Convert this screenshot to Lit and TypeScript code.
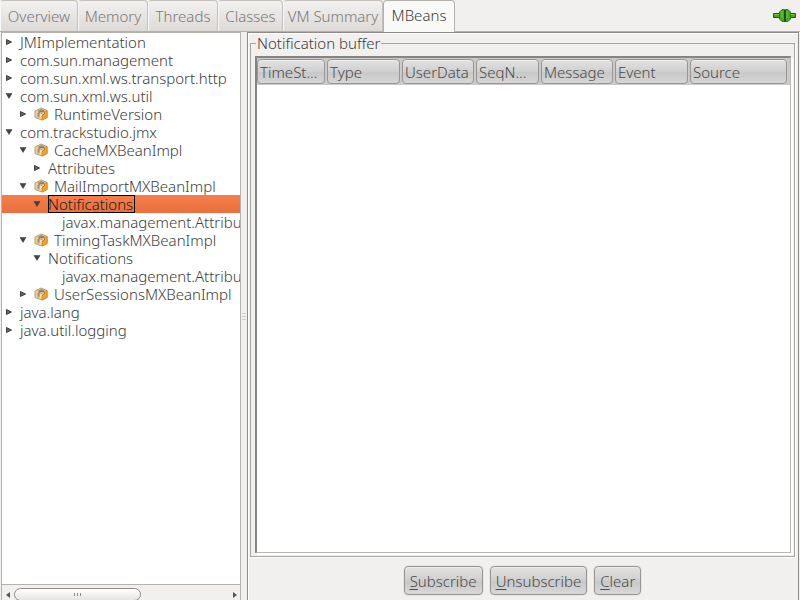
import { LitElement, html, css, svg, nothing } from "lit";
import { customElement, state } from "lit/decorators.js";
import { classMap } from "lit/directives/class-map.js";

interface TreeRow {
  label: string;
  level: number;
  open?: boolean;
  bean?: boolean;
}

const TABS = [
  { label: "Overview", size: "w78" },
  { label: "Memory", size: "w70" },
  { label: "Threads", size: "w70" },
  { label: "Classes", size: "w65" },
  { label: "VM Summary", size: "w100" },
  { label: "MBeans", size: "w72" },
];

const ROWS: TreeRow[] = [
  { label: "JMImplementation", level: 0, open: false },
  { label: "com.sun.management", level: 0, open: false },
  { label: "com.sun.xml.ws.transport.http", level: 0, open: false },
  { label: "com.sun.xml.ws.util", level: 0, open: true },
  { label: "RuntimeVersion", level: 1, open: false, bean: true },
  { label: "com.trackstudio.jmx", level: 0, open: true },
  { label: "CacheMXBeanImpl", level: 1, open: true, bean: true },
  { label: "Attributes", level: 2, open: false },
  { label: "MailImportMXBeanImpl", level: 1, open: true, bean: true },
  { label: "Notifications", level: 2, open: true },
  { label: "javax.management.AttributeChangeNotification", level: 3 },
  { label: "TimingTaskMXBeanImpl", level: 1, open: true, bean: true },
  { label: "Notifications", level: 2, open: true },
  { label: "javax.management.AttributeChangeNotification", level: 3 },
  { label: "UserSessionsMXBeanImpl", level: 1, open: false, bean: true },
  { label: "java.lang", level: 0, open: false },
  { label: "java.util.logging", level: 0, open: false },
];

const COLUMNS = [
  { label: "TimeSt...", share: 70 },
  { label: "Type", share: 75 },
  { label: "UserData", share: 74 },
  { label: "SeqN...", share: 65 },
  { label: "Message", share: 74 },
  { label: "Event", share: 75 },
  { label: "Source", share: 100 },
];
const TOTAL = COLUMNS.reduce((sum, c) => sum + c.share, 0);

const FONT = css`"Noto Sans", "Open Sans", sans-serif`;

@customElement("mbean-tree")
export class MBeanTree extends LitElement {
  @state() private selected = 9;

  static styles = css`
    :host {
      display: flex;
      flex-direction: column;
      min-height: 0;
      box-sizing: border-box;
      border: 1px solid #b5b1ad;
      border-bottom: 0;
      background: #fff;
      color: #3c3c3c;
      font: 300 15px/18px ${FONT};
    }
    .rows {
      flex: 1;
      min-height: 0;
      overflow: hidden;
      margin: 0;
      padding: 0;
      list-style: none;
    }
    .row {
      display: flex;
      align-items: center;
      height: 18px;
      white-space: nowrap;
      cursor: default;
    }
    .level0 { padding-left: 3px; }
    .level1 { padding-left: 17px; }
    .level2 { padding-left: 31px; }
    .level3 { padding-left: 45px; }
    .selected {
      background: linear-gradient(#f57e4c, #e9703d);
      color: #1c1c1c;
    }
    .toggle {
      flex: none;
      width: 8px;
      height: 8px;
      margin-right: 7px;
    }
    .bean {
      flex: none;
      width: 14px;
      height: 14px;
      margin-right: 6px;
    }
    .selected .label { outline: 1px solid #000; outline-offset: -1px; padding-right: 2px; }
    .scroll {
      display: flex;
      align-items: center;
      gap: 4px;
      height: 19px;
      margin-bottom: -4px;
      padding: 0 3px 0 4px;
      border-top: 1px solid #b5b1ad;
      background: #f1f0ee;
    }
    .arrow { width: 4px; height: 6px; flex: none; }
    .track { flex: 1; display: flex; }
    .thumb {
      box-sizing: border-box;
      display: flex;
      align-items: center;
      justify-content: center;
      gap: 2px;
      width: 59%;
      height: 13px;
      border: 1px solid #8f8d8a;
      border-radius: 7px;
      background: linear-gradient(#fff, #e6e4e2);
    }
    .grip { width: 1px; height: 3px; background: #888; }
  `;

  private toggle(open: boolean) {
    return open
      ? svg`<path d="M1 1.500H7L4 6.500Z" fill="#444" stroke="#333" stroke-width=".5"/>`
      : svg`<path d="M1.500 1.500V6.500L6.500 4Z" fill="#666" stroke="#333" stroke-width=".9"/>`;
  }

  private beanIcon() {
    return html`<svg class="bean" viewBox="0 0 14 14" aria-hidden="true">
      <path d="M1 4 7 1l6 2.500v7L8 13 1 10.500Z" fill="#ecd9b2" stroke="#a0875f" stroke-width=".8" />
      <path d="M8 6.500 13.200 3.500v7L8 13Z" fill="#ffa01a" stroke="#c47c18" stroke-width=".6" />
      <path d="M3 4 7.500 2 11 3.800 8 6Z" fill="#a88a5c" />
      <path d="M2.500 6.500 5 5l1 5-2.500 1Z" fill="#c9ad7c" />
      <path d="M5 9.500V5.500L9.500 4l1 2.500L8 8.500" fill="#f7ead0" stroke="#7e6543" stroke-width=".9" />
      <path d="M6.500 6.700 8.800 5.800" stroke="#7e6543" stroke-width=".8" />
    </svg>`;
  }

  render() {
    return html`
      <ul class="rows" role="tree" aria-label="MBeans">
        ${ROWS.map(
          (r, i) => html`<li
            role="treeitem"
            aria-level=${r.level + 1}
            aria-selected=${i === this.selected}
            class=${classMap({ row: true, [`level${r.level}`]: true, selected: i === this.selected })}
            @click=${() => (this.selected = i)}
          >
            <svg class="toggle" viewBox="0 0 8 8" aria-hidden="true">
              ${r.open === undefined ? nothing : this.toggle(r.open)}
            </svg>
            ${r.bean ? this.beanIcon() : nothing}<span class="label">${r.label}</span>
          </li>`
        )}
      </ul>
      <div class="scroll">
        <svg class="arrow" viewBox="0 0 4 6"><path d="M4 0V6L0 3Z" fill="#555" /></svg>
        <div class="track">
          <div class="thumb"><i class="grip"></i><i class="grip"></i><i class="grip"></i></div>
        </div>
        <svg class="arrow" viewBox="0 0 4 6"><path d="M0 0V6L4 3Z" fill="#555" /></svg>
      </div>
    `;
  }
}

@customElement("notification-pane")
export class NotificationPane extends LitElement {
  static styles = css`
    :host {
      display: flex;
      flex-direction: column;
      min-width: 0;
      min-height: 0;
      box-sizing: border-box;
      padding: 0 3px 5px 2px;
      border: 1px solid #8c8b89;
      border-bottom: 0;
      box-shadow: inset 1px 1px #fff;
      font: 300 15px/20px ${FONT};
      color: #3c3c3c;
    }
    .buffer {
      flex: 1;
      display: flex;
      flex-direction: column;
      min-width: 0;
      min-height: 0;
      margin: 0;
      padding: 3px 3px 3px 4px;
      border: 1px solid #a5a4a2;
      box-shadow: 1px 1px #fff;
    }
    .title { padding: 0 1px; margin-left: 1px; }
    .sheet {
      flex: 1;
      border: 1px solid #b8b7b4;
      border-top: 2px solid #858482;
      border-left: 2px solid #858482;
      background: #fff;
      box-shadow: 2px 2px #fff;
    }
    .grid {
      width: 100%;
      table-layout: fixed;
      border-collapse: collapse;
      background: #cbcac9;
    }
    .head { padding: 1px 2px 1px 0; font-weight: 300; text-align: left; }
    .head:last-child { padding-right: 3px; }
    .cell {
      box-sizing: border-box;
      height: 25px;
      padding: 0 2px;
      border: 1px solid #979694;
      border-radius: 4px;
      background: linear-gradient(#e2e2e2, #d0d0d0 50%, #c8c8c8 55%, #d6d6d6);
      box-shadow: inset 0 1px #ececec;
      line-height: 24px;
      white-space: nowrap;
      overflow: hidden;
      color: #4a4a4a;
    }
    .actions {
      display: flex;
      justify-content: center;
      gap: 7px;
      padding-top: 9px;
    }
    .button {
      box-sizing: border-box;
      height: 29px;
      padding: 0 5px;
      border: 1px solid #979694;
      border-radius: 4px;
      background: linear-gradient(#e2e2e2, #cfcfcf 50%, #c8c8c8 55%, #d8d8d8);
      box-shadow: inset 0 1px #ececec, 0 0 0 1px #e6e5e3;
      font: inherit;
      color: #4a4a4a;
    }
    .key { text-decoration: underline; text-underline-offset: 2px; }
  `;

  render() {
    return html`
      <fieldset class="buffer">
        <legend class="title">Notification buffer</legend>
        <div class="sheet">
          <table class="grid" aria-label="Notification buffer">
            <colgroup>
              ${COLUMNS.map((c) => html`<col style="width:${(c.share / TOTAL) * 100}%" />`)}
            </colgroup>
            <thead>
              <tr>
                ${COLUMNS.map((c) => html`<th class="head" scope="col"><div class="cell">${c.label}</div></th>`)}
              </tr>
            </thead>
          </table>
        </div>
      </fieldset>
      <div class="actions">
        ${["Subscribe", "Unsubscribe", "Clear"].map(
          (t) => html`<button class="button" type="button"><span class="key">${t[0]}</span>${t.slice(1)}</button>`
        )}
      </div>
    `;
  }
}

@customElement("app-root")
export class AppRoot extends LitElement {
  @state() private active = 5;

  static styles = css`
    :host {
      display: flex;
      flex-direction: column;
      height: 100vh;
      overflow: hidden;
      background: #f1f0ee;
      font: 300 15px/20px ${FONT};
    }
    .bar {
      display: flex;
      align-items: flex-end;
      height: 31px;
      border-bottom: 1px solid #b5b1ad;
    }
    .tab {
      box-sizing: border-box;
      height: 31px;
      padding: 0;
      border: 1px solid #c3bfbb;
      border-left-color: #f8f8f7;
      border-bottom: 0;
      border-radius: 4px 4px 0 0;
      background: linear-gradient(#f3f2f1, #dcd9d6);
      font: inherit;
      color: #7b7876;
      white-space: nowrap;
    }
    .w65 { width: 65px; }
    .w70 { width: 70px; }
    .w72 { width: 72px; }
    .w78 { width: 78px; }
    .w100 { width: 100px; }
    .active {
      height: 32px;
      margin-bottom: -1px;
      padding: 0 0 4px;
      border-color: #b5b1ad;
      background: #f9f9f8;
      color: #3c3c3c;
    }
    .plug { width: 24px; height: 16px; margin: 0 3px 8px auto; }
    .body {
      flex: 1;
      display: grid;
      grid-template-columns: minmax(0, 240fr) 6px minmax(0, 552fr);
      min-height: 0;
      padding: 0 1px;
    }
    .splitter {
      display: flex;
      flex-direction: column;
      align-items: center;
      justify-content: center;
      gap: 2px;
    }
    .ridge { width: 4px; height: 1px; background: #cfccc9; }
  `;

  render() {
    return html`
      <div class="bar" role="tablist">
        ${TABS.map(
          (t, i) => html`<button
            type="button"
            role="tab"
            aria-selected=${i === this.active}
            class=${classMap({ tab: true, [t.size]: true, active: i === this.active })}
            @click=${() => (this.active = i)}
          >${t.label}</button>`
        )}
        <svg class="plug" viewBox="0 0 24 16" role="img" aria-label="Connected">
          <path d="M.5 6.500h6v4h-6zM17.500 6.500h5v4h-5z" fill="#4fa51c" stroke="#1b5c12" />
          <path d="M1 7.500h6M17 7.500h5" stroke="#7cc444" />
          <path d="M11.500 2.500v12H9L6.500 12V5L9 2.500ZM12.500 2.500v12H15l2.500-2.500V5L15 2.500Z" fill="#4aa51f" stroke="#2a7a17" />
          <path d="M9 4v7M14 4v7" stroke="#79c744" />
          <path d="M12 3v12" stroke="#0c3f09" stroke-width="1.200" />
        </svg>
      </div>
      <div class="body">
        <mbean-tree></mbean-tree>
        <div class="splitter" role="separator" aria-orientation="vertical">
          <i class="ridge"></i><i class="ridge"></i><i class="ridge"></i>
        </div>
        <notification-pane></notification-pane>
      </div>
    `;
  }
}
